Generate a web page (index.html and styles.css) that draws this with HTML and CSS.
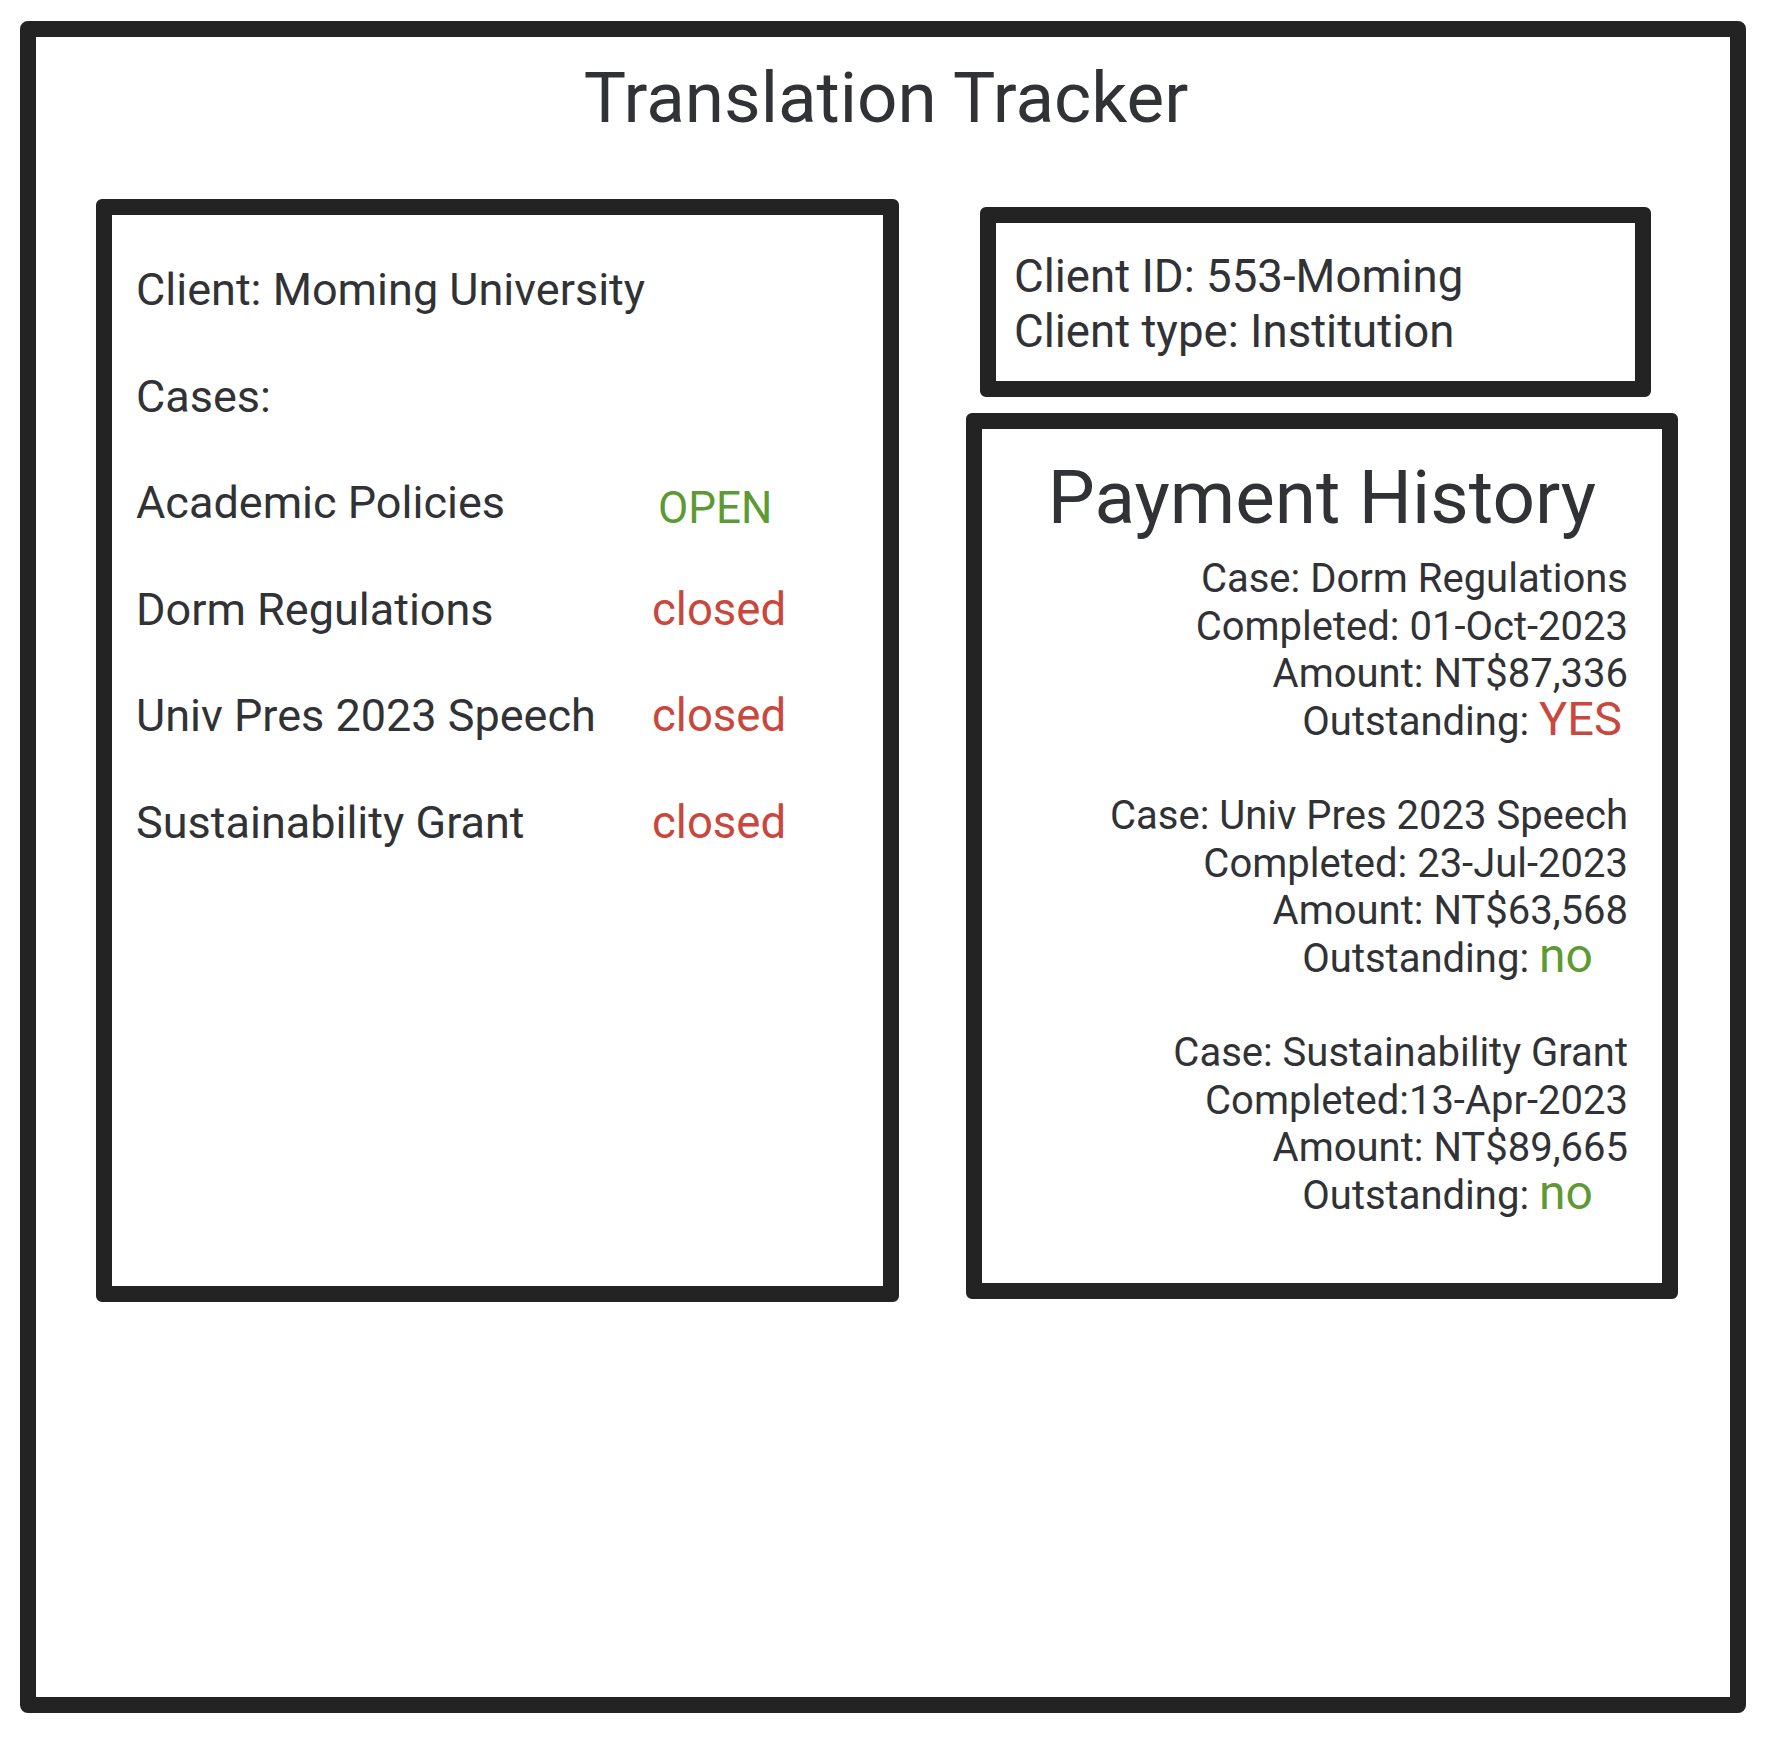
FILE: index.html
```html
<!DOCTYPE html>
<html lang="en">
<head>
<meta charset="utf-8">
<title>Translation Tracker</title>
<link rel="stylesheet" href="styles.css">
</head>
<body>
<div class="frame">
  <h1 class="title">Translation Tracker</h1>
  <div class="row">
    <section class="client-box">
      <div class="cases">
        <div class="full">Client: Moming University</div>
        <div class="full">Cases:</div>
        <div class="name">Academic Policies</div>
        <div class="status open">OPEN</div>
        <div class="name">Dorm Regulations</div>
        <div class="status closed">closed</div>
        <div class="name">Univ Pres 2023 Speech</div>
        <div class="status closed">closed</div>
        <div class="name">Sustainability Grant</div>
        <div class="status closed">closed</div>
      </div>
    </section>
    <div class="side">
      <section class="id-box">
        <div>Client ID: 553-Moming</div>
        <div>Client type: Institution</div>
      </section>
      <section class="pay-box">
        <h2 class="pay-title">Payment History</h2>
        <div class="pay-list">
          <div class="pay-item">
            <div>Case: Dorm Regulations</div>
            <div>Completed: 01-Oct-2023</div>
            <div>Amount: NT$87,336</div>
            <div>Outstanding: <span class="flag yes">YES</span></div>
          </div>
          <div class="pay-item">
            <div>Case: Univ Pres 2023 Speech</div>
            <div>Completed: 23-Jul-2023</div>
            <div>Amount: NT$63,568</div>
            <div>Outstanding: <span class="flag no">no</span></div>
          </div>
          <div class="pay-item">
            <div>Case: Sustainability Grant</div>
            <div>Completed:13-Apr-2023</div>
            <div>Amount: NT$89,665</div>
            <div>Outstanding: <span class="flag no">no</span></div>
          </div>
        </div>
      </section>
    </div>
  </div>
</div>
</body>
</html>
```

FILE: styles.css
```css
* { box-sizing: border-box; }

html, body {
  margin: 0;
  padding: 0;
  background: #ffffff;
}

body {
  font-family: Roboto, "Noto Sans", "Liberation Sans", sans-serif;
  font-weight: 400;
  color: #303236;
}

.frame {
  margin: 21px 0 0 20px;
  width: 1726px;
  height: 1692px;
  border: 16px solid #232323;
  border-radius: 8px;
}

.title {
  margin: 19px 0 0 0;
  padding-left: 6px;
  font-size: 71px;
  font-weight: 400;
  line-height: 84px;
  text-align: center;
}

.row {
  display: flex;
  align-items: flex-start;
  gap: 67px;
  margin-top: 59px;
  padding-left: 60px;
}

.client-box {
  width: 803px;
  height: 1103px;
  border: 16px solid #232323;
  border-radius: 6px;
  padding: 22px 0 0 24px;
}

.cases {
  display: grid;
  grid-template-columns: 516px auto;
  font-size: 45px;
  line-height: 106.6px;
}

.cases .full {
  grid-column: 1 / -1;
}

.status.open {
  font-size: 44px;
  color: #5e9a33;
  padding: 5px 0 0 6px;
  margin-bottom: -5px;
}

.status.closed {
  font-size: 45.5px;
  color: #c9473d;
}

.side {
  width: 712px;
  display: flex;
  flex-direction: column;
  align-items: flex-start;
}

.id-box {
  margin: 8px 0 0 14px;
  width: 671px;
  height: 190px;
  border: 16px solid #232323;
  border-radius: 6px;
  padding: 26px 0 0 18px;
  font-size: 45.6px;
  line-height: 55px;
}

.pay-box {
  margin-top: 16px;
  width: 712px;
  height: 886px;
  border: 16px solid #232323;
  border-radius: 6px;
  padding: 26px 34px 0 0;
}

.pay-title {
  margin: 0;
  padding-left: 34px;
  font-size: 74.6px;
  font-weight: 400;
  line-height: 86px;
  text-align: center;
}

.pay-list {
  margin-top: 14px;
  display: flex;
  flex-direction: column;
  gap: 47px;
  font-size: 40px;
  line-height: 47.5px;
  text-align: right;
}

.flag {
  display: inline-block;
  width: 89px;
  text-align: left;
  line-height: 38px;
}

.flag.yes { color: #c9473d; font-size: 47px; }
.flag.no { color: #5e9a33; font-size: 48px; }
```
